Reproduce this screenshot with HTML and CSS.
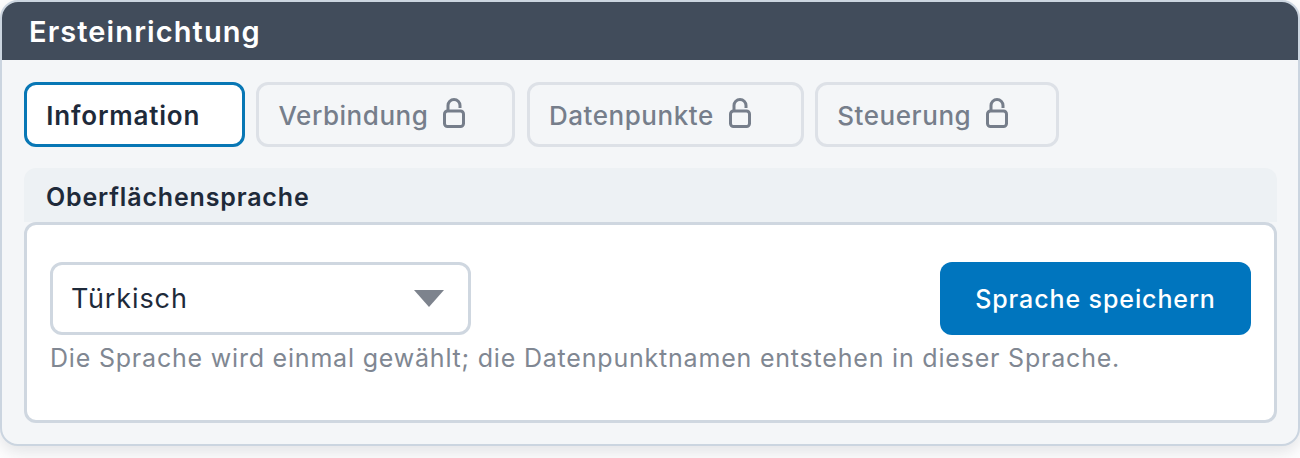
FILE: index.html
```html
<!DOCTYPE html>
<html lang="de">
<head>
<meta charset="utf-8">
<title>Ersteinrichtung</title>
<link rel="stylesheet" href="styles.css">
</head>
<body>
<main class="card">
  <header class="card-head"><h1>Ersteinrichtung</h1></header>
  <div class="card-body">
    <nav class="tabs">
      <button class="tab tab-active">Information</button>
      <button class="tab">Verbindung <svg class="lock" viewBox="0 0 22 30"><path d="M5 12V7.500a6 6 0 0 1 12 0V10"/><rect x="1.500" y="13" width="19" height="15.500" rx="3"/></svg></button>
      <button class="tab">Datenpunkte <svg class="lock" viewBox="0 0 22 30"><path d="M5 12V7.500a6 6 0 0 1 12 0V10"/><rect x="1.500" y="13" width="19" height="15.500" rx="3"/></svg></button>
      <button class="tab">Steuerung <svg class="lock" viewBox="0 0 22 30"><path d="M5 12V7.500a6 6 0 0 1 12 0V10"/><rect x="1.500" y="13" width="19" height="15.500" rx="3"/></svg></button>
    </nav>
    <section class="panel">
      <h2 class="panel-title">Oberflächensprache</h2>
      <div class="panel-box">
        <div class="row">
          <div class="select"><span>Türkisch</span><i class="caret"></i></div>
          <button class="save">Sprache speichern</button>
        </div>
        <p class="hint">Die Sprache wird einmal gewählt; die Datenpunktnamen entstehen in dieser Sprache.</p>
      </div>
    </section>
  </div>
</main>
</body>
</html>
```
FILE: styles.css
```css
* { box-sizing: border-box; }
html, body { margin: 0; padding: 0; background: #fff; }
body { font-family: "Inter", "Noto Sans", sans-serif; height: 458px; overflow: hidden; }
.card {
  height: 446px;
  background: #f4f6f8;
  border: 2px solid #cbd5e0;
  border-radius: 18px;
  overflow: hidden;
  box-shadow: 0 6px 18px rgba(45, 55, 72, .15);
}
.card-head {
  height: 58px;
  background: #414c5b;
  display: flex;
  align-items: center;
  padding-left: 27px;
}
h1 { margin: 0; color: #fff; font-size: 29px; font-weight: 600; letter-spacing: 1.1px; }
.card-body { padding: 22px 21px 0 22px; }
.tabs { display: flex; gap: 11.4px; height: 65px; }
.tab {
  height: 65px;
  display: flex;
  align-items: center;
  gap: 15px;
  padding: 2px 0 0 19.3px;
  border: 3px solid #dde1e7;
  border-radius: 12px;
  background: #f4f6f8;
  color: #767e8b;
  font: 500 26px "Inter", sans-serif;
  letter-spacing: .55px;
}
.tab:nth-child(1) { width: 220.8px; }
.tab:nth-child(2) { width: 259px; }
.tab:nth-child(3) { width: 277px; }
.tab:nth-child(4) { width: 244px; }
.tab-active { background: #fff; border-color: #0877b5; color: #1e2a3a; font-weight: 600; letter-spacing: .8px; }
.lock { width: 22px; height: 30px; fill: none; stroke: #767e8b; stroke-width: 3; margin-top: -5px; }
.panel { margin-top: 21px; }
.panel-title {
  margin: 0;
  height: 54px;
  padding: 14px 0 0 22px;
  background: #edf1f4;
  border-radius: 12px 12px 0 0;
  color: #1e2a3a;
  font-size: 25px;
  font-weight: 600;
  line-height: 30px;
  letter-spacing: .83px;
}
.panel-box {
  height: 201px;
  padding: 37px 23px 0;
  background: #fff;
  border: 3px solid #cfd7e0;
  border-radius: 12px;
}
.row { display: flex; justify-content: space-between; height: 73px; }
.select {
  width: 421px;
  height: 73px;
  display: flex;
  align-items: center;
  justify-content: space-between;
  padding: 0 24px 0 18px;
  background: #fff;
  border: 3px solid #cfd7e0;
  border-radius: 12px;
  color: #1e2a3a;
  font-size: 27px;
  letter-spacing: .9px;
}
.caret { border-left: 15px solid transparent; border-right: 15px solid transparent; border-top: 17px solid #7d838d; }
.save {
  width: 311px;
  height: 73px;
  border: 0;
  border-radius: 12px;
  background: #0075be;
  color: #fff;
  font: 500 25px "Inter", sans-serif;
  letter-spacing: .9px;
}
.hint { margin: 7px 0 0; color: #808792; font-size: 25px; line-height: 32px; white-space: nowrap; letter-spacing: .8px; }
```
